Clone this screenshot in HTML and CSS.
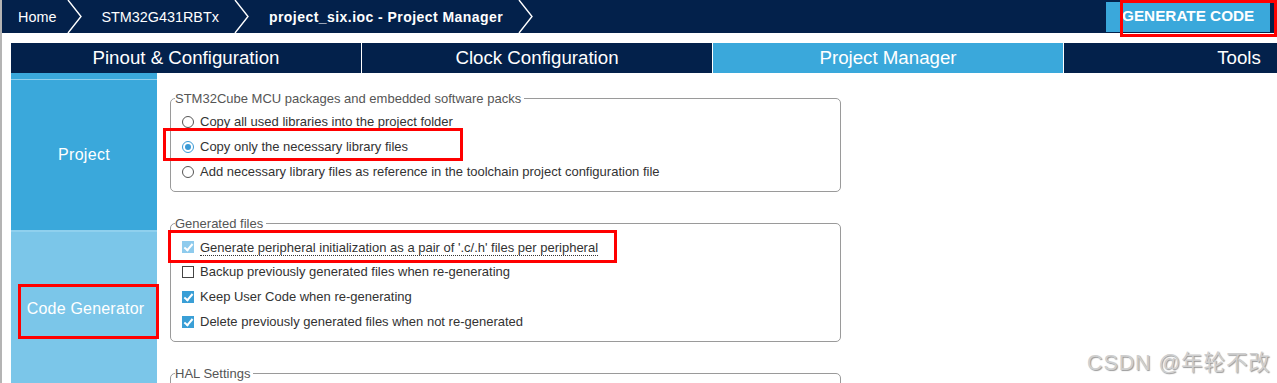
FILE: index.html
```html
<!DOCTYPE html>
<html lang="en">
<head>
    <meta charset="UTF-8">
    <title>project_six.ioc - Project Manager</title>
    <link rel="stylesheet" href="styles.css">
</head>
<body>
    <header class="topbar">
        <nav class="crumbs">
            <span class="crumb">Home</span>
            <svg class="chev" width="16" height="33" viewBox="0 0 16 33"><polyline points="1,0 14,16.5 1,33" fill="none" stroke="#fff" stroke-width="1.4"/></svg>
            <span class="crumb">STM32G431RBTx</span>
            <svg class="chev" width="16" height="33" viewBox="0 0 16 33"><polyline points="1,0 14,16.5 1,33" fill="none" stroke="#fff" stroke-width="1.4"/></svg>
            <span class="crumb crumb-current">project_six.ioc - Project Manager</span>
            <svg class="chev" width="16" height="33" viewBox="0 0 16 33"><polyline points="1,0 14,16.5 1,33" fill="none" stroke="#fff" stroke-width="1.4"/></svg>
        </nav>
        <button class="generate">GENERATE CODE</button>
    </header>

    <div class="tabs">
        <div class="tab">Pinout &amp; Configuration</div>
        <div class="tab">Clock Configuration</div>
        <div class="tab active">Project Manager</div>
        <div class="tab">Tools</div>
    </div>

    <main class="workspace">
        <aside class="sidebar">
            <div class="side-item">Project</div>
            <div class="side-item selected">Code Generator</div>
        </aside>

        <section class="settings">
            <fieldset class="group">
                <legend>STM32Cube MCU packages and embedded software packs</legend>
                <label class="opt"><span class="radio"></span>Copy all used libraries into the project folder</label>
                <label class="opt"><span class="radio on"></span>Copy only the necessary library files</label>
                <label class="opt"><span class="radio"></span>Add necessary library files as reference in the toolchain project configuration file</label>
            </fieldset>

            <fieldset class="group">
                <legend>Generated files</legend>
                <label class="opt"><span class="check on faded"></span><span class="dotted">Generate peripheral initialization as a pair of '.c/.h' files per peripheral</span></label>
                <label class="opt"><span class="check"></span>Backup previously generated files when re-generating</label>
                <label class="opt"><span class="check on"></span>Keep User Code when re-generating</label>
                <label class="opt"><span class="check on"></span>Delete previously generated files when not re-generated</label>
            </fieldset>

            <fieldset class="group">
                <legend>HAL Settings</legend>
                <label class="opt">&nbsp;</label>
            </fieldset>
        </section>
    </main>

    <div class="mark mark-generate"></div>
    <div class="mark mark-copy"></div>
    <div class="mark mark-periph"></div>
    <div class="mark mark-codegen"></div>

    <div class="watermark">CSDN @年轮不改</div>
</body>
</html>
```

FILE: styles.css
```css
* {
    margin: 0;
    padding: 0;
    box-sizing: border-box;
    font-family: 'Liberation Sans', Arial, sans-serif;
}

body {
    width: 1277px;
    height: 383px;
    overflow: hidden;
    background: #fff;
    position: relative;
    border-left: 2px solid #b4b4b4;
}

/* top bar */
.topbar {
    height: 33px;
    margin-left: -2px;
    background: #03214b;
    display: flex;
    justify-content: space-between;
    align-items: stretch;
}

.crumbs {
    display: flex;
    align-items: center;
    padding-left: 18px;
}

.crumb {
    color: #fff;
    font-size: 14.4px;
    white-space: nowrap;
}

.crumb-current {
    font-weight: bold;
    font-size: 14px;
    letter-spacing: 0.45px;
}

.chev {
    display: block;
    margin: 0 18px 0 11px;
}

.chev + .crumb-current {
    margin-left: 1px;
}

.crumb + .chev + .crumb + .chev {
    margin-left: 15px;
}

.generate {
    margin: 2px 7px 1px 0;
    width: 164px;
    background: #3aa8db;
    border: none;
    color: #fff;
    font-size: 15.3px;
    font-weight: bold;
    text-align: left;
    padding-left: 16px;
    padding-bottom: 2px;
}

/* tabs */
.tabs {
    margin: 10px 0 0 9px;
    display: flex;
    height: 30px;
    background: #03214b;
    overflow: hidden;
}

.tab {
    flex: 0 0 351px;
    border-right: 1px solid #fff;
    color: #fff;
    font-size: 18.7px;
    display: flex;
    align-items: center;
    justify-content: center;
}

.tab.active {
    background: #3aa8db;
}

/* workspace */
.workspace {
    display: flex;
    margin-left: 9px;
    height: 310px;
    overflow: hidden;
}

.sidebar {
    width: 146px;
    display: flex;
    flex-direction: column;
    background: #3aa8db;
    padding-top: 6px;
}

.side-item {
    flex: 0 0 151px;
    border-top: 1px solid #8fd0ee;
    color: #fff;
    font-size: 16px;
    display: flex;
    align-items: center;
    justify-content: center;
    letter-spacing: 0.3px;
}

.side-item.selected {
    background: #7bc6e9;
    border-top: 2px solid #8fd0ee;
    flex-basis: 156px;
    letter-spacing: 0.2px;
    padding-left: 3px;
}

.settings {
    flex: 1;
    padding: 18px 0 0 13px;
}

.group {
    width: 671px;
    border: 1px solid #9a9a9a;
    border-radius: 5px;
    padding: 3px 0 7px 11px;
    margin-bottom: 24px;
}

.group legend {
    font-size: 13px;
    line-height: 15px;
    color: #555;
    margin-left: -7px;
    padding-right: 3px;
}

.opt {
    display: flex;
    align-items: center;
    height: 25px;
    font-size: 13px;
    color: #333;
    white-space: nowrap;
}

.radio {
    width: 12px;
    height: 12px;
    border: 1px solid #555;
    border-radius: 50%;
    margin-right: 6px;
    position: relative;
    background: #fff;
}

.radio.on {
    border-color: #3a9ad6;
}

.radio.on::after {
    content: '';
    position: absolute;
    left: 2px;
    top: 2px;
    width: 6px;
    height: 6px;
    border-radius: 50%;
    background: #3a9ad6;
}

.check {
    width: 12px;
    height: 12px;
    border: 1px solid #444;
    margin-right: 6px;
    position: relative;
    background: #fff;
}

.check.on {
    border: none;
    background: #3a9fd6;
}

.check.on::after {
    content: '';
    position: absolute;
    left: 4px;
    top: 1px;
    width: 3px;
    height: 7px;
    border: solid #fff;
    border-width: 0 2px 2px 0;
    transform: rotate(40deg);
}

.check.faded {
    background: #8fcbed;
}

.dotted {
    border-bottom: 1px dotted #333;
    line-height: 15px;
    padding-top: 2px;
}

/* annotation boxes */
.mark {
    position: absolute;
    border: 3px solid #f00;
}

.mark-generate { left: 1118px; top: 0; width: 157px; height: 37px; }
.mark-copy { left: 161px; top: 128px; width: 300px; height: 33px; }
.mark-periph { left: 166px; top: 230px; width: 449px; height: 33px; }
.mark-codegen { left: 16px; top: 284px; width: 141px; height: 55px; }

.watermark {
    position: absolute;
    left: 1085px;
    top: 345px;
    font-family: 'Liberation Sans', 'Noto Sans CJK SC', sans-serif;
    font-size: 21.5px;
    letter-spacing: 0.9px;
    color: #cfcfcf;
    text-shadow: 1px 1px 1px #999;
}
```
